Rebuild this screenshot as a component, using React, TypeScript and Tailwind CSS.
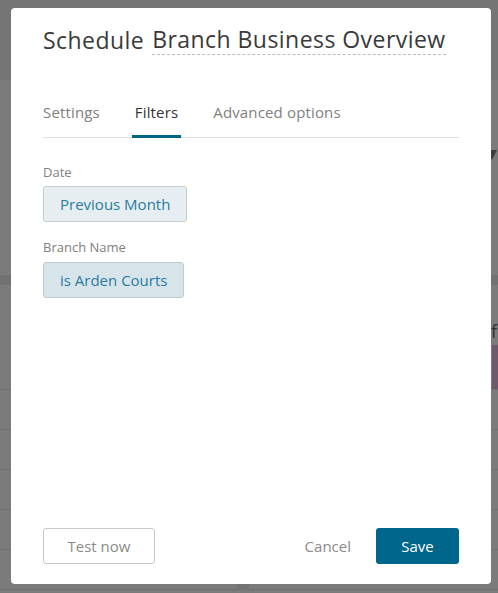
import React from "react";

const font = { fontFamily: '"Open Sans", "Liberation Sans", sans-serif' };

const Background = () => (
  <div className="h-[593px] w-[498px] overflow-hidden bg-[#7b7b7b]">
    <div className="h-[80px] bg-[#757575]" />
    <div className="flex h-[195px] justify-end">
      <div className="mt-[70px] mr-[1px] h-0 w-0 border-x-[5px] border-t-[10px] border-x-transparent border-t-[#3d3d3d]" />
    </div>
    <div className="h-[10px] bg-[#727272]" />
    <div className="flex h-[60px] items-end justify-end pr-[1px] text-[18px] text-[#2f2f2f]">f</div>
    <div className="flex h-[44px] justify-end">
      <div className="w-[6px] bg-[#6e5a6a]" />
    </div>
    <div className="border-t border-[#707070]" />
    <div className="h-[40px] border-b border-[#707070]" />
    <div className="h-[40px] border-b border-[#707070]" />
    <div className="h-[40px] border-b border-[#707070]" />
    <div className="h-[40px] border-b border-[#707070]" />
    <div className="flex h-[40px] border-b border-[#707070] pl-[237px]">
      <div className="w-[12px] bg-[#737373]" />
    </div>
  </div>
);

export default function App() {
  return (
    <div className="relative h-[593px] w-[498px]" style={font}>
      <Background />
      <div className="absolute top-[8px] left-[11px] flex h-[576px] w-[480px] flex-col rounded-[4px] bg-white px-[32px] pt-[16px] pb-[20px]">
        <h1 className="flex items-start gap-[8px] text-[23px] leading-[32px] tracking-[0.45px] text-[#3a3a3a]">
          <span>Schedule</span>
          <span className="border-b border-dashed border-[#bdbdbd] leading-[30px]">
            Branch Business Overview
          </span>
        </h1>

        <div className="mt-[45px] flex gap-[35px] border-b border-[#dedede] text-[15px] tracking-[0.15px]">
          <div className="pb-[13px] text-[#808080]">Settings</div>
          <div className="relative -mx-[3px] px-[3px] pb-[13px] text-[#333]">
            Filters
            <div className="absolute right-0 bottom-[-1px] left-0 h-[3px] bg-[#006489]" />
          </div>
          <div className="pb-[13px] text-[#808080]">Advanced options</div>
        </div>

        <div className="mt-[25px] text-[13px] text-[#808080]">Date</div>
        <div className="mt-[4px] flex">
          <div className="rounded-[3px] border border-[#c5cdd1] bg-[#e6eef1] px-[16px] py-[7px] text-[15px] leading-[20px] text-[#2a7ba0]">
            Previous Month
          </div>
        </div>

        <div className="mt-[16px] text-[13px] text-[#808080]">Branch Name</div>
        <div className="mt-[4px] flex">
          <div className="rounded-[3px] border border-[#bfcbd1] bg-[#d7e5eb] px-[16px] py-[7px] text-[15px] leading-[20px] text-[#2a7ba0]">
            is Arden Courts
          </div>
        </div>

        <div className="mt-auto flex items-center text-[15px]">
          <button className="h-[36px] w-[112px] rounded-[3px] border border-[#c8c8c8] text-[#8a8a8a]">
            Test now
          </button>
          <div className="flex-1" />
          <button className="mr-[25px] text-[#8a8a8a]">Cancel</button>
          <button className="h-[36px] w-[83px] rounded-[3px] bg-[#00658a] text-white">
            Save
          </button>
        </div>
      </div>
    </div>
  );
}
